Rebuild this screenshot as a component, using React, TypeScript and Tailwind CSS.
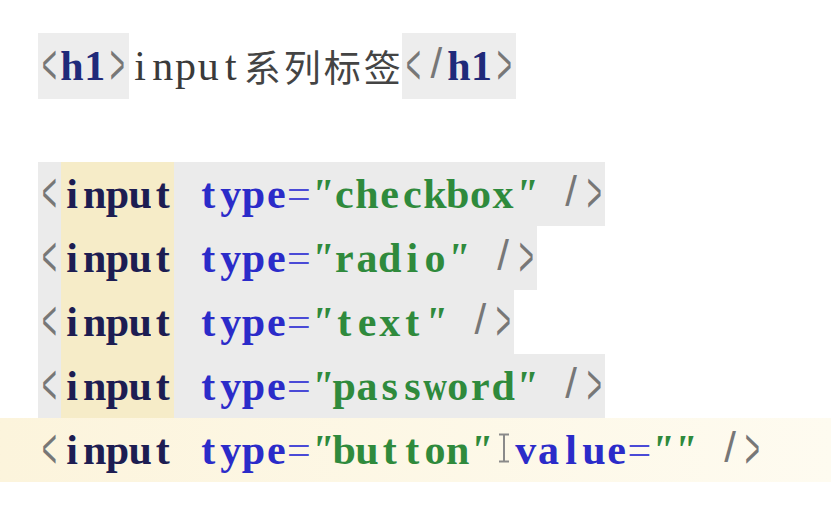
const serif = "font-['Liberation_Serif',serif]";

function Cells({ text, className = "" }: { text: string; className?: string }) {
  return (
    <>
      {text.split("").map((c, i) => (
        <span
          key={i}
          className={`flex h-full w-[22.7px] shrink-0 items-center justify-center ${className}`}
        >
          {c === " " ? (
            "\u00a0"
          ) : c === "w" ? (
            <span className="inline-block scale-x-[0.78]">{c}</span>
          ) : (
            c
          )}
        </span>
      ))}
    </>
  );
}

// thin, tall angle brackets like the editor font
function Angle({ ch }: { ch: string }) {
  return (
    <span className="flex h-full w-[22.7px] shrink-0 items-center justify-center">
      <span className="inline-block translate-y-[-1px] scale-x-[0.6] scale-y-[1.35] font-['Liberation_Sans',sans-serif] text-[42px] leading-[26px] font-light text-[#777]">
        {ch}
      </span>
    </span>
  );
}

function Slash() {
  return (
    <span className="flex h-full w-[22.7px] shrink-0 items-center justify-center">
      <span className="inline-block translate-y-[-2px] font-['Liberation_Sans',sans-serif] text-[42px] leading-[40px] text-[#777]">
        /
      </span>
    </span>
  );
}

function Quote() {
  return <Cells text={'"'} className="font-bold italic text-[#2f8a3c]" />;
}

function Cursor() {
  return (
    <span className="flex h-full w-[22.7px] shrink-0 items-center justify-center">
      <svg width="14" height="30" viewBox="0 0 14 30" className="translate-x-[1px] translate-y-[-2px]">
        <path d="M2 1.5h10M7 1.5v27M2 28.5h10" stroke="#8a8a8a" strokeWidth="2" fill="none" />
      </svg>
    </span>
  );
}

function InputLine({ value }: { value: string }) {
  return (
    <div className="flex h-[64px] items-center pl-[38px]">
      <div className="flex h-full items-center bg-[#ebebeb]">
        <Angle ch="<" />
        <Cells text="input" className="bg-[#f6ecc8] font-bold text-[#1d1d52]" />
        <Cells text=" " />
        <Cells text="type" className="font-bold text-[#2b2bc9]" />
        <Cells text="=" className="text-[#4a4ad6]" />
        <Quote />
        <Cells text={value} className="font-bold text-[#2f8a3c]" />
        <Quote />
        <Cells text=" " />
        <Slash />
        <Angle ch=">" />
      </div>
    </div>
  );
}

export default function App() {
  return (
    <div className={`h-[525px] w-[831px] overflow-hidden bg-white pt-[34px] text-[42px] leading-none ${serif}`}>
      {/* <h1> line */}
      <div className="flex h-[64px] items-center pl-[38px]">
        <div className="flex h-[66px] items-center bg-[#ededed]">
          <Angle ch="<" />
          <Cells text="h1" className="font-bold text-[#1f2a7a]" />
          <Angle ch=">" />
        </div>
        <Cells text="input" className="text-[#3a3a3a]" />
        <div className="flex h-full items-center font-['Noto_Sans_CJK_SC',sans-serif] text-[37px] text-[#444]">
          {"系列标签".split("").map((c) => (
            <span key={c} className="flex w-[40px] justify-center">
              {c}
            </span>
          ))}
        </div>
        <div className="flex h-[66px] items-center bg-[#ededed]">
          <Angle ch="<" />
          <Slash />
          <Cells text="h1" className="font-bold text-[#1f2a7a]" />
          <Angle ch=">" />
        </div>
      </div>

      <div className="h-[64px]" />

      <InputLine value="checkbox" />
      <InputLine value="radio" />
      <InputLine value="text" />
      <InputLine value="password" />

      {/* current line */}
      <div className="flex h-[64px] items-center bg-gradient-to-r from-[#fcf4dc] to-[#fefbf0] pl-[38px]">
        <Angle ch="<" />
        <Cells text="input" className="font-bold text-[#1d1d52]" />
        <Cells text=" " />
        <Cells text="type" className="font-bold text-[#2b2bc9]" />
        <Cells text="=" className="text-[#4a4ad6]" />
        <Quote />
        <Cells text="button" className="font-bold text-[#2f8a3c]" />
        <Quote />
        <Cursor />
        <Cells text="value" className="font-bold text-[#2b2bc9]" />
        <Cells text="=" className="text-[#4a4ad6]" />
        <Quote />
        <Quote />
        <Cells text=" " />
        <Slash />
        <Angle ch=">" />
      </div>
    </div>
  );
}
